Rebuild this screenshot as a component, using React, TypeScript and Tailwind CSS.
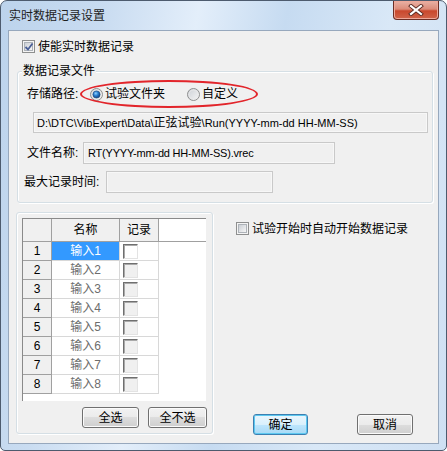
import React from "react";

const font = "font-['Liberation_Sans','Noto_Sans_CJK_SC',sans-serif]";

function CheckBox({ checked }: { checked?: boolean }) {
  return (
    <span className="relative inline-flex h-[13px] w-[13px] shrink-0 items-center justify-center border border-[#8e8f8f] bg-[#f4f4f4]">
      <span className="h-[9px] w-[9px] border border-[#aeb3b9] bg-[linear-gradient(135deg,#cbcfd5,#f6f6f6)]" />
      {checked && (
        <svg className="absolute left-[1px] top-[1px]" width="10" height="10" viewBox="0 0 10 10">
          <path d="M1.5 5 L4 7.5 L8.5 1.5" fill="none" stroke="#4a5f97" strokeWidth="1.8" />
        </svg>
      )}
    </span>
  );
}

function Radio({ checked }: { checked?: boolean }) {
  return (
    <svg width="13" height="13" viewBox="0 0 13 13" className="shrink-0">
      <defs>
        <linearGradient id="rbg" x1="0" y1="0" x2="1" y2="1">
          <stop offset="0" stopColor="#cbcfd5" />
          <stop offset="1" stopColor="#f7f7f7" />
        </linearGradient>
        <radialGradient id="rdot" cx="0.4" cy="0.35" r="0.7">
          <stop offset="0" stopColor="#8fd1ff" />
          <stop offset="0.45" stopColor="#2a7fd0" />
          <stop offset="1" stopColor="#0d3a74" />
        </radialGradient>
      </defs>
      <circle cx="6.5" cy="6.5" r="6" fill="url(#rbg)" stroke="#8e8f8f" />
      <circle cx="6.5" cy="6.5" r="4.5" fill="none" stroke="#e9e9e9" strokeWidth="0.8" />
      {checked && <circle cx="6.5" cy="6.5" r="3.6" fill="url(#rdot)" stroke="#17457e" strokeWidth="0.6" />}
    </svg>
  );
}

function Button({ label, w, primary }: { label: string; w: string; primary?: boolean }) {
  const base = "flex h-[21px] items-center justify-center rounded-[3px] border text-[12px] leading-[14px] text-black";
  const look = primary
    ? "border-[#3c7fb1] bg-[linear-gradient(#eaf6fd_0%,#d9f0fc_50%,#bee6fd_50%,#a7d9f5_100%)] shadow-[inset_0_0_0_1px_#5cc8f0]"
    : "border-[#707070] bg-[linear-gradient(#f2f2f2_0%,#ebebeb_50%,#dddddd_50%,#cfcfcf_100%)] shadow-[inset_0_0_0_1px_#fbfbfb]";
  return <div className={`${base} ${look} ${w}`}>{label}</div>;
}

const rows = [1, 2, 3, 4, 5, 6, 7, 8];

export default function App() {
  return (
    <div className={`${font} flex h-[451px] w-[447px] flex-col rounded-t-[7px] rounded-b-[5px] border border-[#4d5b6e] bg-[linear-gradient(100deg,#bcd3ec_0%,#c9dcf1_20%,#e3eefa_38%,#c6dbf1_55%,#d9e8f7_75%,#cfe0f3_100%)] text-[12px] text-black`}>
      {/* title bar */}
      <div className="flex h-[29px] shrink-0 items-start">
        <span className="pl-[8px] pt-[8px] leading-[14px] text-[12px] text-[#1e1e1e]">实时数据记录设置</span>
        <div className="ml-auto mr-[7px] flex h-[19px] w-[46px] items-center justify-center rounded-b-[4px] border border-t-0 border-[#6b2e25] bg-[linear-gradient(#e9b2a6_0%,#db8b79_45%,#c9482d_55%,#d0644a_100%)] shadow-[inset_0_0_0_1px_#eea899]">
          <svg width="16" height="12" viewBox="0 0 16 12">
            <path d="M3 2 L13 10 M13 2 L3 10" stroke="#5a2a22" strokeWidth="4" strokeLinecap="square" />
            <path d="M3 2 L13 10 M13 2 L3 10" stroke="#ffffff" strokeWidth="2.2" strokeLinecap="square" />
          </svg>
        </div>
      </div>

      {/* client area */}
      <div className="mx-[7px] mb-[6px] flex flex-1 flex-col border border-[#97a8bd] bg-[#f0f0f0]">
        <div className="ml-[13px] mt-[9px] flex h-[13px] items-center gap-[3px]">
          <CheckBox checked />
          <span className="leading-[14px]">使能实时数据记录</span>
        </div>

        {/* group 1 */}
        <div className="relative ml-[8px] mt-[18px] h-[132px] w-[416px] rounded-[3px] border border-[#d5dfe5] shadow-[inset_1px_1px_0_#ffffff,1px_1px_0_#ffffff]">
          <span className="absolute -top-[9px] left-[4px] bg-[#f0f0f0] px-[1px] leading-[16px]">数据记录文件</span>

          <div className="ml-[9px] mt-[15px] flex h-[14px] items-center leading-[14px]">
            <span className="w-[63px]">存储路径:</span>
            <Radio checked />
            <span className="ml-[2px] w-[60px]">试验文件夹</span>
            <span className="ml-[22px]"><Radio /></span>
            <span className="ml-[2px]">自定义</span>
          </div>
          <div className="pointer-events-none absolute left-[62px] top-[8px] h-[28px] w-[178px] rounded-[50%] border-2 border-[#e2252b]" />

          <div className="ml-[15px] mt-[11px] flex h-[21px] w-[395px] items-center border border-[#c9c9c9] bg-[#f0f0f0] pl-[3px] text-[11px] leading-[14px] shadow-[inset_0_0_0_1px_#f7f7f7]">
            D:\DTC\VibExpert\Data\<span className="text-[12px]">正弦试验</span>\Run(YYYY-mm-dd HH-MM-SS)
          </div>

          <div className="ml-[9px] mt-[9px] flex h-[22px] items-center leading-[14px]">
            <span className="w-[56px]">文件名称:</span>
            <div className="flex h-[22px] w-[252px] items-center border border-[#c9c9c9] pl-[4px] text-[11px] tracking-[-0.2px] shadow-[inset_0_0_0_1px_#f7f7f7]">
              RT(YYYY-mm-dd HH-MM-SS).vrec
            </div>
          </div>

          <div className="ml-[6px] mt-[7px] flex h-[22px] items-center leading-[14px]">
            <span className="w-[82px]">最大记录时间:</span>
            <div className="h-[22px] w-[167px] border border-[#c9c9c9] shadow-[inset_0_0_0_1px_#f7f7f7]" />
          </div>
        </div>

        {/* bottom */}
        <div className="mt-[9px] flex">
          <div className="ml-[7px] h-[222px] w-[197px] rounded-[3px] border border-[#d5dfe5] shadow-[inset_1px_1px_0_#ffffff,1px_1px_0_#ffffff]">
            <div className="ml-[5px] mt-[5px] h-[183px] w-[184px] border-l border-t border-[#8a8a8a] bg-white">
              <div className="flex h-[23px] border-b border-[#a0a0a0]">
                <div className="w-[29px] border-r border-[#a0a0a0] bg-[#f0f0f0]" />
                <div className="flex w-[68px] items-center justify-center border-r border-[#a0a0a0] bg-[#f0f0f0] leading-[14px]">名称</div>
                <div className="flex w-[39px] items-center justify-center border-r border-[#a0a0a0] bg-[#f0f0f0] leading-[14px]">记录</div>
              </div>
              {rows.map((n) => (
                <div key={n} className="flex h-[19px]">
                  <div className="flex w-[29px] items-center justify-center border-b border-r border-[#a0a0a0] bg-[#f0f0f0] leading-[14px]">{n}</div>
                  <div
                    className={
                      n === 1
                        ? "flex w-[68px] items-center justify-center border-b border-r border-[#d8d8d8] bg-[#3399ff] leading-[14px] text-white"
                        : "flex w-[68px] items-center justify-center border-b border-r border-[#d8d8d8] leading-[14px] text-[#6d6d6d]"
                    }
                  >
                    输入{n}
                  </div>
                  <div className="flex w-[39px] items-center border-b border-r border-[#d8d8d8] pl-[3px]">
                    <span
                      className={
                        n === 1
                          ? "h-[15px] w-[15px] border border-b-[#e3e3e3] border-l-[#6f6f6f] border-r-[#e3e3e3] border-t-[#6f6f6f] bg-white shadow-[inset_1px_1px_0_#a9a9a9]"
                          : "h-[15px] w-[15px] border border-b-[#e3e3e3] border-l-[#6f6f6f] border-r-[#e3e3e3] border-t-[#6f6f6f] bg-[#f0f0f0] shadow-[inset_1px_1px_0_#a9a9a9]"
                      }
                    />
                  </div>
                </div>
              ))}
            </div>
            <div className="mt-[6px] flex">
              <div className="ml-[65px]"><Button label="全选" w="w-[57px]" /></div>
              <div className="ml-[9px]"><Button label="全不选" w="w-[59px]" /></div>
            </div>
          </div>

          <div className="flex flex-1 flex-col">
            <div className="ml-[23px] mt-[10px] flex h-[13px] items-center gap-[3px]">
              <CheckBox />
              <span className="leading-[14px]">试验开始时自动开始数据记录</span>
            </div>
            <div className="mt-[179px] flex">
              <div className="ml-[40px]"><Button label="确定" w="w-[55px]" primary /></div>
              <div className="ml-[49px]"><Button label="取消" w="w-[56px]" /></div>
            </div>
          </div>
        </div>
      </div>
    </div>
  );
}
